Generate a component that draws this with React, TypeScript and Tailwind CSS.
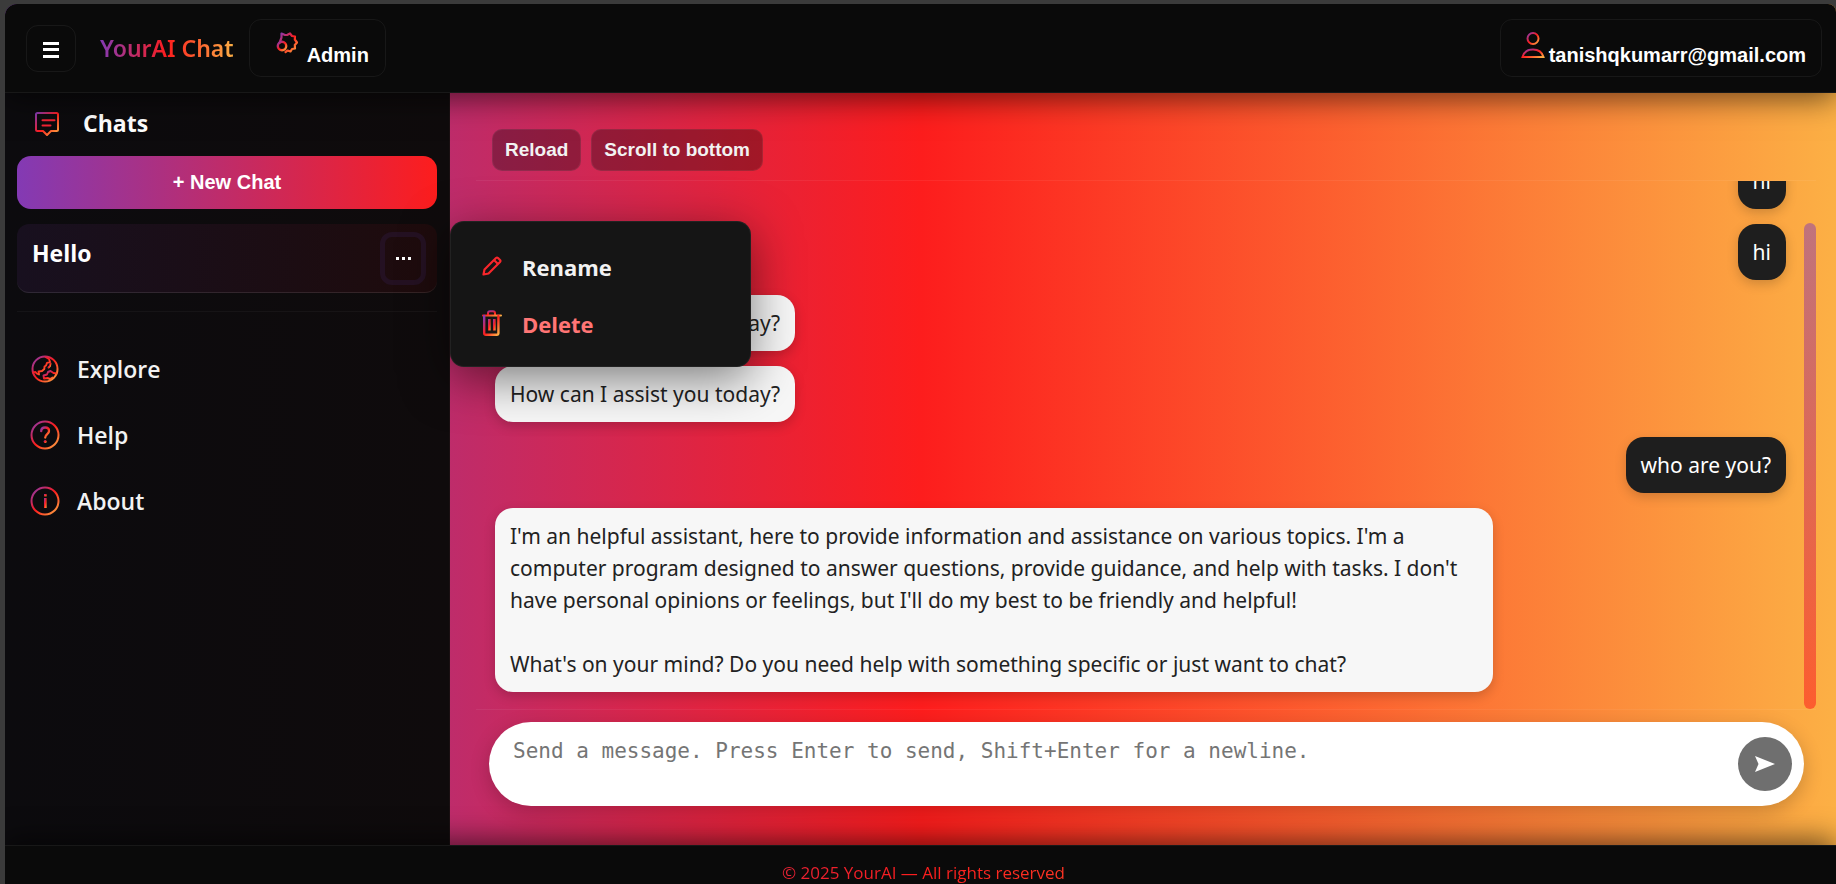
import { useState } from "react";
import type { ReactNode } from "react";

function BrandGradient() {
  return (
    <svg width="0" height="0" className="absolute" aria-hidden="true">
      <defs>
        <linearGradient id="brand" x1="0" y1="0" x2="1" y2="1">
          <stop offset="0" stopColor="#833ab4" />
          <stop offset="0.5" stopColor="#fd1d1d" />
          <stop offset="1" stopColor="#fcb045" />
        </linearGradient>
      </defs>
    </svg>
  );
}

type IconProps = { className: string; children: ReactNode; viewBox?: string };

function Icon({ className, children, viewBox = "0 0 24 24" }: IconProps) {
  return (
    <svg
      className={className}
      viewBox={viewBox}
      fill="none"
      stroke="url(#brand)"
      strokeWidth="2"
      strokeLinecap="round"
      strokeLinejoin="round"
      aria-hidden="true"
    >
      {children}
    </svg>
  );
}

const MenuIcon = () => (
  <svg className="h-[18px] w-[18px]" viewBox="0 0 18 18" fill="#fff" aria-hidden="true">
    <rect x="1" y="1" width="16" height="3" />
    <rect x="1" y="7" width="16" height="3" />
    <rect x="1" y="14" width="16" height="3" />
  </svg>
);

const GearIcon = () => (
  <Icon className="h-6 w-6">
    <path
      d="M4.500 12 6.500 6.500 6.500 2.500 10 4 12.500 3.800 15 2.500 17 5 20 5.500 19.800 8.500 22 11.500 19.800 14 20 17.500 17 18 15.500 20.500 12.500 19.500 10.500 21"
      strokeWidth="2.200"
    />
    <circle cx="7" cy="15" r="4.200" strokeWidth="2.400" />
    <path d="M7 13v2.500" strokeWidth="1.200" />
  </Icon>
);

const PersonIcon = () => (
  <Icon className="h-7 w-6" viewBox="0 0 24 28">
    <circle cx="12" cy="7.500" r="5.500" />
    <path d="M1.500 26C3 20.800 7 18.500 12 18.500s9 2.300 10.500 7.500z" strokeLinejoin="miter" />
  </Icon>
);

const ChatIcon = () => (
  <Icon className="h-6 w-6">
    <path d="M2.500 1h19A1.500 1.500 0 0 1 23 2.500v15a1.500 1.500 0 0 1-1.500 1.500H16l-4 4-4-4H2.500A1.500 1.500 0 0 1 1 17.500v-15A1.500 1.500 0 0 1 2.500 1z" />
    <path d="M7.500 8.200h12M7.500 13.500h8" stroke="#ef2333" />
  </Icon>
);

const EarthIcon = () => (
  <Icon className="h-[30px] w-[30px]" viewBox="-1 -1 30 30">
    <circle cx="14" cy="14" r="12.500" />
    <g strokeWidth="1.900">
      <path d="M14.500 2l3.500 2 1 3-3 .8-1 2.700-1.500 1-.2 2.500-2.300 2-3.500.5.5 3-2.300-1-1.200-1.500-2.500.5" />
      <path d="M19.500 8.500l-.5 2.500-1.500 1.500" />
      <path d="M25.500 18.500l-3-.5-3-2-2.500 1-1 2.500-3.500 1 .5 3 3.500-.5 2.500 1 2.500-1.500" />
    </g>
  </Icon>
);

const HelpIcon = () => (
  <Icon className="h-[30px] w-[30px]" viewBox="0 0 30 30">
    <circle cx="15" cy="15" r="13.500" />
    <path d="M11.200 11.200c0-2.300 1.700-3.700 3.900-3.700s3.900 1.400 3.900 3.500c0 3-3.800 3.300-3.800 6.500" strokeWidth="2.300" />
    <circle cx="15.200" cy="21.500" r="1.500" fill="url(#brand)" stroke="none" />
  </Icon>
);

const InfoIcon = () => (
  <Icon className="h-[30px] w-[30px]" viewBox="0 0 30 30">
    <circle cx="15" cy="15" r="13.500" />
    <rect x="14" y="12" width="2.600" height="10" fill="url(#brand)" stroke="none" />
    <rect x="14" y="8" width="2.600" height="2.400" fill="url(#brand)" stroke="none" />
  </Icon>
);

const PencilIcon = () => (
  <svg
    className="h-5 w-5"
    viewBox="0 0 20 20"
    fill="none"
    stroke="#f8262b"
    strokeWidth="2.200"
    strokeLinejoin="round"
    aria-hidden="true"
  >
    <path d="M1.500 18.500l1-5L14 2a1.500 1.500 0 0 1 2 0l2 2a1.500 1.500 0 0 1 0 2L6.500 17.500z" />
    <path d="M12 4l4 4" />
  </svg>
);

const TrashIcon = () => (
  <Icon className="h-[26px] w-5" viewBox="0 0 20 26">
    <path d="M1 5.500h18v.1M6 5V3.200C6 2 6.800 1.300 8 1.300h3c1.200 0 2 .7 2 1.900V5" />
    <path d="M2.200 6v17.200A1.700 1.700 0 0 0 3.900 24.800h10.800a1.700 1.700 0 0 0 1.700-1.700V6" strokeWidth="2.400" />
    <rect x="6" y="9" width="2.600" height="11.500" fill="url(#brand)" stroke="none" />
    <rect x="11" y="9" width="2.600" height="11.500" fill="url(#brand)" stroke="none" />
  </Icon>
);

const SendIcon = () => (
  <svg className="h-4 w-5" viewBox="0 0 20 16" fill="#fff" aria-hidden="true">
    <path d="M0 0l20 8-20 8 3.500-8z" />
  </svg>
);

type Message = { id: number; from: "user" | "bot"; text: string };

const messages: Message[] = [
  { id: 1, from: "user", text: "hi" },
  { id: 2, from: "user", text: "hi" },
  { id: 3, from: "bot", text: "How can I assist you today?" },
  { id: 4, from: "bot", text: "How can I assist you today?" },
  { id: 5, from: "user", text: "who are you?" },
  {
    id: 6,
    from: "bot",
    text: "I'm an helpful assistant, here to provide information and assistance on various topics. I'm a computer program designed to answer questions, provide guidance, and help with tasks. I don't have personal opinions or feelings, but I'll do my best to be friendly and helpful!\n\nWhat's on your mind? Do you need help with something specific or just want to chat?",
  },
];

function Bubble({ message }: { message: Message }) {
  const look =
    message.from === "user" ? "self-end bg-[#1e1e1e] text-white" : "self-start bg-[#f7f7f7] text-[#222]";
  return (
    <li
      className={`max-w-[998px] shrink-0 whitespace-pre-line rounded-[18px] px-[15px] py-3 font-['Noto_Sans',sans-serif] text-[21px] leading-8 shadow-[0_4px_12px_rgba(0,0,0,0.18)] ${look}`}
    >
      {message.text}
    </li>
  );
}

function Header() {
  return (
    <header className="relative z-20 flex h-[89px] shrink-0 items-center border-b border-white/6 bg-[#0a0a0a] pl-[21px] pr-[14px] shadow-[0_6px_28px_rgba(0,0,0,0.55)]">
      <button
        type="button"
        aria-label="Toggle sidebar"
        className="flex h-[47px] w-[50px] items-center justify-center rounded-xl border border-white/6 pt-1"
      >
        <MenuIcon />
      </button>
      <span className="ml-6 bg-linear-to-r/srgb from-[#833ab4] via-[#fd1d1d] to-[#fcb045] bg-clip-text text-[23px] font-semibold text-transparent font-['Noto_Sans',sans-serif]">
        YourAI Chat
      </span>
      <button
        type="button"
        className="ml-[15px] flex h-[58px] gap-2 rounded-xl border border-white/6 pl-[25px] pr-4 pt-[11px] font-['Liberation_Sans',sans-serif] text-xl font-bold text-white"
      >
        <GearIcon />
        <span className="pt-3 leading-6">Admin</span>
      </button>
      <button
        type="button"
        className="ml-auto flex h-[58px] gap-1 rounded-xl border border-white/6 pl-5 pr-[15px] pt-[11px] font-['Liberation_Sans',sans-serif] text-xl font-bold text-white"
      >
        <PersonIcon />
        <span className="pt-3 leading-6">tanishqkumarr@gmail.com</span>
      </button>
    </header>
  );
}

function Sidebar() {
  const links = [
    { label: "Explore", icon: <EarthIcon /> },
    { label: "Help", icon: <HelpIcon /> },
    { label: "About", icon: <InfoIcon /> },
  ];
  return (
    <aside className="flex w-[445px] shrink-0 flex-col border-r border-[#1a1012] bg-linear-to-r/srgb from-[#0c0b0e] to-[#0f0b0c] px-3">
      <h2 className="flex h-[63px] items-center gap-6 pb-0.5 pl-[18px] text-[23px] font-bold text-white">
        <ChatIcon />
        Chats
      </h2>
      <button
        type="button"
        className="h-[53px] rounded-[14px] bg-linear-to-r/srgb from-[#833ab4] to-[#fd1d1d] pb-0.5 font-['Liberation_Sans',sans-serif] text-xl font-bold text-white"
      >
        + New Chat
      </button>
      <div className="mt-[15px] flex h-[69px] justify-between rounded-xl border-b border-white/10 bg-linear-to-r/srgb from-[#18101f] to-[#1e0b0c] pl-[15px] pr-[11px] pt-2">
        <span className="pt-[5px] text-[23px] font-bold leading-8 text-white">Hello</span>
        <button
          type="button"
          aria-label="Chat options"
          className="flex h-[53px] w-[46px] items-center justify-center gap-[3px] rounded-xl border-[5px] border-[#241122]"
        >
          <span className="h-[3px] w-[3px] bg-white" />
          <span className="h-[3px] w-[3px] bg-white" />
          <span className="h-[3px] w-[3px] bg-white" />
        </button>
      </div>
      <nav className="mt-[18px] border-t border-white/4 pt-6">
        {links.map((link) => (
          <a key={link.label} href="#" className="flex h-[66px] items-center gap-[17px] pl-[13px] text-[23px] font-semibold text-[#f2f2f2]">
            {link.icon}
            {link.label}
          </a>
        ))}
      </nav>
    </aside>
  );
}

function ChatMenu() {
  return (
    <div
      role="menu"
      className="absolute left-0 top-32 z-10 flex w-[301px] flex-col rounded-[14px] border border-white/6 bg-[#151515] py-[15px] shadow-[0_12px_48px_rgba(0,0,0,0.5)]"
    >
      <button type="button" role="menuitem" className="flex h-[57px] items-center gap-5 pl-[31px] text-[22px] font-bold text-[#f2f2f2]">
        <PencilIcon />
        <span className="pt-1">Rename</span>
      </button>
      <button type="button" role="menuitem" className="flex h-[57px] items-center gap-5 pl-[31px] text-[22px] font-bold text-[#ff7575]">
        <TrashIcon />
        <span className="pt-1">Delete</span>
      </button>
    </div>
  );
}

function Conversation() {
  const [draft, setDraft] = useState("");
  const tool =
    "h-[42px] rounded-[10px] border border-white/6 bg-black/30 px-3 font-['Liberation_Sans',sans-serif] text-[19px] font-bold text-[#f2f2f2]";
  return (
    <main className="relative flex min-w-0 flex-1 flex-col pb-[39px] pl-[26px] pr-5">
      <div className="flex gap-[10px] border-b border-white/6 px-4 pb-[9px] pt-9">
        <button type="button" className={tool}>Reload</button>
        <button type="button" className={tool}>Scroll to bottom</button>
      </div>
      <div className="flex min-h-0 flex-1">
        <ul className="flex min-w-0 flex-1 flex-col justify-end gap-[15px] overflow-hidden pb-[17px] pl-[19px] pr-[18px]">
          {messages.map((message) => (
            <Bubble key={message.id} message={message} />
          ))}
        </ul>
        <div className="flex w-3 flex-col justify-end" aria-hidden="true">
          <div className="h-[92%] rounded-full bg-linear-to-b/srgb from-[#833ab4]/50 to-[#fd1d1d]/55" />
        </div>
      </div>
      <form className="border-t border-white/6 pl-[13px] pr-3 pt-3" onSubmit={(event) => event.preventDefault()}>
        <div className="flex h-[84px] items-center rounded-full bg-white pl-6 pr-3 shadow-[0_6px_20px_rgba(0,0,0,0.2)]">
          <textarea
            aria-label="Message"
            value={draft}
            onChange={(event) => setDraft(event.target.value)}
            placeholder="Send a message. Press Enter to send, Shift+Enter for a newline."
            className="h-[54px] min-w-0 flex-1 resize-none bg-transparent font-['DejaVu_Sans_Mono',monospace] text-[21px] leading-7 text-[#222] outline-none placeholder:text-[#757575]"
          />
          <button
            type="submit"
            aria-label="Send"
            className="flex h-[54px] w-[54px] shrink-0 items-center justify-center rounded-full bg-[#6f6f6f]"
          >
            <SendIcon />
          </button>
        </div>
      </form>
      <ChatMenu />
    </main>
  );
}

export default function App() {
  return (
    <div className="h-screen overflow-hidden bg-[#3b3b3b] pl-[5px] pt-1 font-['Open_Sans','Noto_Sans',sans-serif]">
      <BrandGradient />
      <div className="flex h-full flex-col overflow-hidden rounded-tl-xl rounded-tr-lg bg-linear-to-r/srgb from-[#833ab4] via-[#fd1d1d] to-[#fcb045]">
        <Header />
        <div className="flex min-h-0 flex-1">
          <Sidebar />
          <Conversation />
        </div>
        <footer className="relative z-20 h-[39px] shrink-0 border-t border-white/6 bg-[#0a0a0a] pl-1.5 pt-[15px] text-center text-[17px] leading-6 shadow-[0_-6px_28px_rgba(0,0,0,0.55)]">
          <p className="bg-linear-to-r/srgb from-[#833ab4] via-[#fd1d1d] to-[#fcb045] bg-clip-text text-transparent">
            © 2025 YourAI — All rights reserved
          </p>
        </footer>
      </div>
    </div>
  );
}
